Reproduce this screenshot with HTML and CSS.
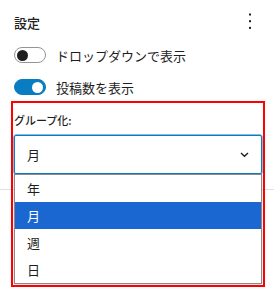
FILE: index.html
```html
<!DOCTYPE html>
<html lang="ja">
<head>
    <meta charset="UTF-8">
    <title>設定</title>
    <link rel="stylesheet" href="styles.css">
</head>
<body>
    <div class="panel">
        <div class="panel-header">
            <h2>設定</h2>
            <svg class="more" width="6" height="20" viewBox="0 0 6 20">
                <rect x="2" y="1.5" width="2" height="2"/>
                <rect x="2" y="8.2" width="2" height="2"/>
                <rect x="2" y="14.9" width="2" height="2"/>
            </svg>
        </div>
        <div class="panel-body">
            <div class="toggles">
                <label class="toggle-row">
                    <span class="toggle"><span class="knob"></span></span>
                    ドロップダウンで表示
                </label>
                <label class="toggle-row">
                    <span class="toggle on"><span class="knob"></span></span>
                    投稿数を表示
                </label>
            </div>
            <div class="group">
                <div class="group-label">グループ化:</div>
                <div class="select-wrap">
                    <div class="select">
                        <span>月</span>
                        <svg width="9" height="6" viewBox="0 0 9 6">
                            <polyline points="1,1 4.5,4.3 8,1" fill="none" stroke="#1e1e1e" stroke-width="1.4"/>
                        </svg>
                    </div>
                    <ul class="options">
                        <li>年</li>
                        <li class="selected">月</li>
                        <li>週</li>
                        <li>日</li>
                    </ul>
                </div>
            </div>
        </div>
    </div>
    <div class="highlight"></div>
</body>
</html>
```
FILE: styles.css
```css
html {
    height: 100%;
}
body {
    margin: 0;
    min-height: 296px;
    background-color: #fff;
    font-family: "Noto Sans CJK JP", "Noto Sans", sans-serif;
    color: #1e1e1e;
    position: relative;
}
.panel-header {
    height: 44px;
    display: flex;
    align-items: center;
    justify-content: space-between;
    padding: 0 21px 0 14px;
}
.panel-header h2 {
    margin: 0;
    font-size: 13px;
    font-weight: 500;
}
.more {
    fill: #1e1e1e;
    margin-top: -1px;
}
.panel-body {
    padding: 3px 12px 15px 14px;
    border-bottom: 1px solid #e0e0e0;
}
.toggles {
    display: flex;
    flex-direction: column;
    gap: 16px;
}
.toggle-row {
    display: flex;
    align-items: center;
    height: 16px;
    font-size: 13px;
    gap: 10px;
}
.toggle {
    box-sizing: border-box;
    width: 32px;
    height: 16px;
    border: 1px solid #949494;
    border-radius: 8px;
    display: flex;
    align-items: center;
    padding: 0 2px;
    background-color: #fff;
}
.toggle .knob {
    width: 11px;
    height: 11px;
    border-radius: 50%;
    background-color: #1e1e1e;
}
.toggle.on {
    background-color: #0a7cc1;
    border-color: #0a7cc1;
    justify-content: flex-end;
}
.toggle.on .knob {
    background-color: #fff;
}
.group {
    margin-top: 17px;
}
.group-label {
    font-size: 11px;
    font-weight: 500;
    line-height: 16px;
    margin-bottom: 7px;
}
.select-wrap {
    position: relative;
}
.select {
    box-sizing: border-box;
    height: 39px;
    border: 1px solid #0a7cc1;
    box-shadow: 0 0 0 0.5px #0a7cc1;
    border-radius: 2px;
    display: flex;
    align-items: center;
    justify-content: space-between;
    padding: 0 12px 0 12px;
    font-size: 13px;
}
.options {
    position: absolute;
    top: 100%;
    left: 0;
    right: 0;
    margin: 0;
    padding: 0;
    list-style: none;
    background-color: #fff;
    border: 1px solid #8a8a8a;
    box-shadow: 0 1px 2px rgba(0, 0, 0, 0.15);
    font-size: 13px;
    z-index: 1;
}
.options li {
    height: 27px;
    line-height: 27px;
    padding-left: 12px;
}
.options li.selected {
    background-color: #1a67d2;
    color: #fff;
}
.highlight {
    position: absolute;
    left: 11px;
    top: 101px;
    width: 254px;
    height: 186px;
    box-sizing: border-box;
    border: 2px solid #f00;
    pointer-events: none;
    z-index: 2;
}
```
